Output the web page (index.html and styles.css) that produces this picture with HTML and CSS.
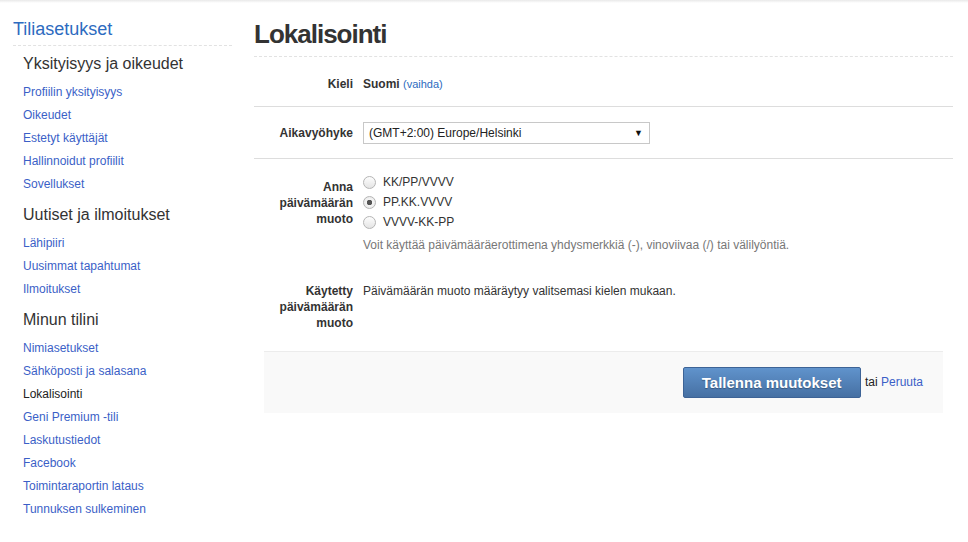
FILE: index.html
```html
<!DOCTYPE html>
<html lang="fi">
<head>
    <meta charset="UTF-8">
    <title>Lokalisointi</title>
    <link rel="stylesheet" href="styles.css">
</head>
<body>
    <div class="topbar"></div>
    <section class="page">
        <div class="sidebar">
            <h2 class="side_title">Tiliasetukset</h2>
            <h3>Yksityisyys ja oikeudet</h3>
            <ul>
                <li><a href="#">Profiilin yksityisyys</a></li>
                <li><a href="#">Oikeudet</a></li>
                <li><a href="#">Estetyt käyttäjät</a></li>
                <li><a href="#">Hallinnoidut profiilit</a></li>
                <li><a href="#">Sovellukset</a></li>
            </ul>
            <h3>Uutiset ja ilmoitukset</h3>
            <ul>
                <li><a href="#">Lähipiiri</a></li>
                <li><a href="#">Uusimmat tapahtumat</a></li>
                <li><a href="#">Ilmoitukset</a></li>
            </ul>
            <h3>Minun tilini</h3>
            <ul>
                <li><a href="#">Nimiasetukset</a></li>
                <li><a href="#">Sähköposti ja salasana</a></li>
                <li class="current">Lokalisointi</li>
                <li><a href="#">Geni Premium -tili</a></li>
                <li><a href="#">Laskutustiedot</a></li>
                <li><a href="#">Facebook</a></li>
                <li><a href="#">Toimintaraportin lataus</a></li>
                <li><a href="#">Tunnuksen sulkeminen</a></li>
            </ul>
        </div>

        <div class="main">
            <h1>Lokalisointi</h1>

            <div class="row row_lang">
                <div class="label">Kieli</div>
                <div class="value"><b>Suomi</b> <a class="small_link" href="#">(vaihda)</a></div>
            </div>

            <div class="row row_tz">
                <div class="label">Aikavyöhyke</div>
                <div class="value">
                    <span class="select_wrap">
                        <select>
                            <option>(GMT+2:00) Europe/Helsinki</option>
                        </select>
                    </span>
                </div>
            </div>

            <div class="row row_date">
                <div class="label">Anna päivämäärän muoto</div>
                <div class="value">
                    <label class="radio"><input type="radio" name="fmt"> KK/PP/VVVV</label>
                    <label class="radio"><input type="radio" name="fmt" checked> PP.KK.VVVV</label>
                    <label class="radio"><input type="radio" name="fmt"> VVVV-KK-PP</label>
                    <p class="hint">Voit käyttää päivämääräerottimena yhdysmerkkiä (-), vinoviivaa (/) tai välilyöntiä.</p>
                </div>
            </div>

            <div class="row row_used">
                <div class="label">Käytetty päivämäärän muoto</div>
                <div class="value">Päivämäärän muoto määräytyy valitsemasi kielen mukaan.</div>
            </div>

            <div class="actions">
                <button class="save_btn">Tallenna muutokset</button>
                tai <a href="#">Peruuta</a>
            </div>
        </div>
    </section>
</body>
</html>
```

FILE: styles.css
```css
*{
    margin:0;
    padding:0;
    box-sizing:border-box;
}
body{
    font-family:"Liberation Sans", Arial, sans-serif;
    font-size:12px;
    color:#333;
    background-color:#fff;
}
a{
    color:#3b5fc7;
    text-decoration:none;
}
.topbar{
    height:3px;
    background:linear-gradient(#e9e9e9, #fff);
}
.page{
    display:flex;
    align-items:flex-start;
    padding-left:13px;
}

/* sidebar */
.sidebar{
    width:219px;
    flex-shrink:0;
}
.side_title{
    margin-top:15px;
    padding-bottom:5px;
    font-size:18px;
    line-height:22px;
    font-weight:normal;
    color:#2d6bc0;
    border-bottom:1px dashed #e2e2e2;
}
.sidebar h3{
    margin:9px 0 7px 10px;
    font-size:16px;
    line-height:20px;
    font-weight:normal;
    color:#333;
}
.side_title + h3{
    margin-top:8px;
}
.sidebar ul li{
    list-style-type:none;
    padding-left:10px;
    line-height:23px;
}
.sidebar li.current{
    color:#222;
}

/* main */
.main{
    width:699px;
    margin-left:22px;
}
.main h1{
    margin-top:16px;
    padding-bottom:7px;
    font-size:26px;
    line-height:30px;
    letter-spacing:-1px;
    color:#333;
    border-bottom:1px dashed #e2e2e2;
}
.row{
    display:flex;
    align-items:flex-start;
    border-bottom:1px solid #ddd;
    line-height:16px;
}
.row .label{
    width:99px;
    flex-shrink:0;
    text-align:right;
    font-weight:bold;
    color:#333;
}
.row .value{
    margin-left:10px;
}
.row_lang{
    padding:19px 0 14px;
}
.small_link{
    font-size:11px;
    color:#2d6bc0;
}
.row_tz{
    align-items:center;
    padding:15px 0 14px;
}
.select_wrap{
    position:relative;
    display:inline-block;
}
.select_wrap select{
    appearance:none;
    -webkit-appearance:none;
    width:287px;
    height:22px;
    padding:0 20px 0 5px;
    border:1px solid #c8c8c8;
    border-radius:0;
    background:#fff;
    font-family:"Liberation Sans", Arial, sans-serif;
    font-size:12px;
    color:#222;
}
.select_wrap::after{
    content:"▼";
    position:absolute;
    right:7px;
    top:5px;
    font-size:9px;
    line-height:12px;
    color:#111;
    pointer-events:none;
}
.row_date{
    border-bottom:none;
    padding:13px 0 10px;
}
.row_date .label{
    padding-top:7px;
}
.radio{
    display:flex;
    align-items:center;
    height:20px;
    color:#333;
}
.radio input{
    appearance:none;
    -webkit-appearance:none;
    width:13px;
    height:13px;
    margin-right:7px;
    border:1px solid #b5b5b5;
    border-radius:50%;
    background:linear-gradient(#fdfdfd, #e4e4e4);
}
.radio input:checked{
    background:radial-gradient(circle, #555 0, #555 2.5px, #f4f4f4 3px, #e6e6e6 100%);
}
.hint{
    margin-top:5px;
    color:#777;
    line-height:16px;
}
.row_used{
    border-bottom:none;
    padding:20px 0 20px;
}
.row_used .value{
    color:#333;
}

.actions{
    margin:0 10px;
    padding:15px 20px 15px;
    background-color:#f9f9f9;
    border-top:1px solid #ececec;
    text-align:right;
    color:#222;
}
.save_btn{
    width:178px;
    height:31px;
    margin-right:1px;
    border:1px solid #3d6396;
    border-radius:2px;
    background:linear-gradient(#6093cc, #4670a3);
    color:#fff;
    font-family:"Liberation Sans", Arial, sans-serif;
    font-size:15px;
    font-weight:bold;
    text-shadow:0 1px 1px rgba(0,0,0,0.3);
    vertical-align:middle;
}
```
